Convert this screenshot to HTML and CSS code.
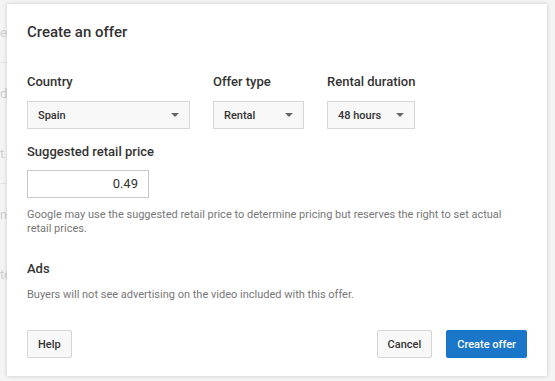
FILE: index.html
```html
<!DOCTYPE html>
<html lang="en">
<head>
    <meta charset="UTF-8">
    <title>Create an offer</title>
    <link rel="stylesheet" href="styles.css">
</head>
<body>
    <!-- page behind the dialog -->
    <div class="backdrop">
        <div class="bg-row first">to view</div>
        <div class="bg-row">e</div>
        <div class="bg-row line">d</div>
        <div class="bg-row">t</div>
        <div class="bg-row line">n</div>
        <div class="bg-row">te</div>
    </div>

    <div class="dialog">
        <h1>Create an offer</h1>

        <div class="fields">
            <div class="field">
                <label>Country</label>
                <div class="select country">Spain <span class="arrow"></span></div>
            </div>
            <div class="field">
                <label>Offer type</label>
                <div class="select type">Rental <span class="arrow"></span></div>
            </div>
            <div class="field">
                <label>Rental duration</label>
                <div class="select duration">48 hours <span class="arrow"></span></div>
            </div>
        </div>

        <div class="section">
            <label>Suggested retail price</label>
            <div class="price">0.49</div>
            <p class="hint">Google may use the suggested retail price to determine pricing but reserves the right to set actual retail prices.</p>
        </div>

        <div class="section ads">
            <label>Ads</label>
            <p class="hint">Buyers will not see advertising on the video included with this offer.</p>
        </div>

        <div class="actions">
            <button class="btn">Help</button>
            <div class="spacer"></div>
            <button class="btn">Cancel</button>
            <button class="btn primary">Create offer</button>
        </div>
    </div>
</body>
</html>
```

FILE: styles.css
```css
body {
    margin: 0;
    font-family: Roboto, 'Noto Sans', sans-serif;
    background: #f4f4f4;
    color: #333;
    height: 381px;
    overflow: hidden;
    position: relative;
}

.backdrop {
    width: 40px;
    color: #d0d0d0;
    font-size: 13px;
}

.bg-row {
    height: 60px;
    display: flex;
    align-items: center;
    white-space: nowrap;
    overflow: hidden;
}

.bg-row.first {
    height: 6px;
    align-items: flex-end;
    margin-top: -4px;
}

.bg-row.line {
    border-top: 1px solid #e6e6e6;
}

.dialog {
    position: absolute;
    left: 7px;
    top: 4px;
    width: 540px;
    height: 372px;
    box-sizing: border-box;
    background: #fff;
    box-shadow: 0 0 4px rgba(0, 0, 0, 0.18);
    padding: 18px 20px 18px 20px;
    display: flex;
    flex-direction: column;
}

h1 {
    margin: 0;
    font-size: 15px;
    font-weight: 500;
    color: #333;
    line-height: 20px;
}

label {
    display: block;
    font-size: 13px;
    font-weight: 500;
    color: #333;
    line-height: 16px;
}

.fields {
    display: flex;
    margin-top: 32px;
}

.field {
    margin-right: 23px;
}

.field label {
    margin-bottom: 11px;
}

.select {
    height: 28px;
    box-sizing: border-box;
    border: 1px solid #d6d6d6;
    background: #f8f8f8;
    font-size: 11px;
    font-weight: 500;
    color: #333;
    display: flex;
    align-items: center;
    justify-content: space-between;
    padding: 0 10px 0 10px;
}

.country { width: 163px; }
.type { width: 91px; }
.duration { width: 88px; }

.arrow {
    width: 0;
    height: 0;
    border-left: 4px solid transparent;
    border-right: 4px solid transparent;
    border-top: 4px solid #666;
}

.section {
    margin-top: 15px;
}

.section label {
    margin-bottom: 10px;
}

.price {
    width: 122px;
    height: 28px;
    box-sizing: border-box;
    border: 1px solid #c8c8c8;
    font-size: 13px;
    text-align: right;
    line-height: 26px;
    padding-right: 10px;
    color: #333;
}

.hint {
    margin: 10px 0 0 0;
    font-size: 11px;
    line-height: 14px;
    color: #777;
}

.ads {
    margin-top: 25px;
}

.ads label {
    margin-bottom: 0;
}

.ads .hint {
    margin-top: 11px;
}

.actions {
    display: flex;
    margin-top: auto;
    align-items: center;
}

.spacer {
    flex: 1;
}

.btn {
    height: 28px;
    font-family: inherit;
    font-size: 11px;
    font-weight: 500;
    color: #333;
    background: #f8f8f8;
    border: 1px solid #d6d6d6;
    border-radius: 2px;
    padding: 0 10px;
    margin-left: 14px;
}

.btn:first-child {
    margin-left: 0;
}

.btn.primary {
    background: #1976c9;
    border-color: #1976c9;
    color: #fff;
}
```
